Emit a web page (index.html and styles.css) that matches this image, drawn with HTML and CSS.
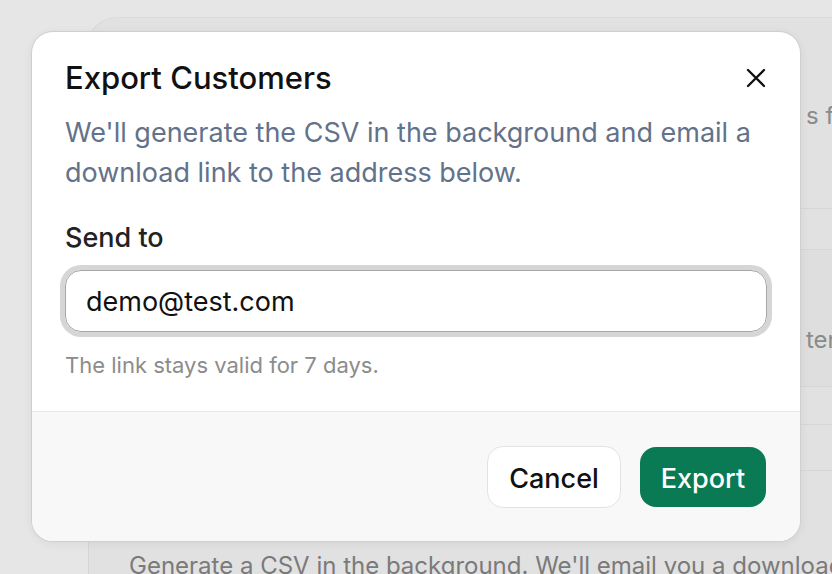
FILE: index.html
```html
<!DOCTYPE html>
<html lang="en">
<head>
<meta charset="utf-8">
<title>Export Customers</title>
<link rel="stylesheet" href="styles.css">
</head>
<body>
<div class="app">
  <section class="card">
    <div class="card-head">
      <div class="spacer"></div>
      <p class="bg-text">s for reporting</p>
    </div>
    <div class="row row-a"></div>
    <div class="row row-b">
      <div class="spacer"></div>
      <p class="bg-text">tenant data</p>
    </div>
    <div class="row row-c"></div>
    <div class="row row-d"></div>
    <p class="card-foot">Generate a CSV in the background. We'll email you a download link.</p>
  </section>
</div>

<div class="modal" role="dialog" aria-labelledby="modal-title">
  <div class="modal-body">
    <div class="modal-head">
      <h2 id="modal-title" class="modal-title">Export Customers</h2>
      <button class="close" aria-label="Close">
        <svg width="20" height="20" viewBox="0 0 20 20" fill="none" stroke="#111" stroke-width="2.3" stroke-linecap="round"><path d="M2 2 L18 18 M18 2 L2 18"/></svg>
      </button>
    </div>
    <p class="modal-desc">We'll generate the CSV in the background and email a download link to the address below.</p>
    <label class="field-label" for="email">Send to</label>
    <div class="field-ring">
      <input id="email" class="field-input" type="text" value="demo@test.com">
    </div>
    <p class="hint">The link stays valid for 7 days.</p>
  </div>
  <div class="modal-foot">
    <button class="btn btn-cancel">Cancel</button>
    <button class="btn btn-export">Export</button>
  </div>
</div>
</body>
</html>
```

FILE: styles.css
```css
* { box-sizing: border-box; }
html, body { margin: 0; padding: 0; }
body {
  width: 832px;
  height: 574px;
  overflow: hidden;
  background: #e6e6e6;
  font-family: Inter, "Noto Sans", sans-serif;
  position: relative;
}
.app {
  padding: 17px 0 0 88px;
}
.card {
  background: #e1e1e1;
  border-top: 1px solid #dadada;
  border-left: 1px solid #d6d6d6;
  border-top-left-radius: 28px;
  height: 700px;
}
.card-head, .row {
  display: grid;
  grid-template-columns: 717px 1fr;
  border-bottom: 1px solid #d6d6d6;
}
.card-head { height: 191px; align-items: start; }
.row-a { height: 41px; }
.row-b { height: 137px; background: #dedede; align-items: end; }
.row-c { height: 38px; }
.row-d { height: 46px; }
.bg-text {
  margin: 0;
  white-space: nowrap;
  font-size: 24px;
  color: #8a8a8a;
  line-height: 32px;
}
.card-head .bg-text { margin-top: 82px; }
.row-b .bg-text { margin-bottom: 30px; }
.card-foot {
  margin: 80px 0 0 40px;
  font-size: 24px;
  color: #7a7a7a;
  white-space: nowrap;
}

.modal {
  position: absolute;
  left: 31px;
  top: 31px;
  width: 770px;
  height: 511px;
  background: #fff;
  border: 1px solid #cfcfcf;
  border-radius: 22px;
  box-shadow: 0 2px 10px rgba(0,0,0,0.06);
  overflow: hidden;
  display: flex;
  flex-direction: column;
}
.modal-body {
  padding: 28px 33px 0 33px;
  flex: 1;
}
.modal-head {
  display: flex;
  justify-content: space-between;
  align-items: center;
}
.modal-title {
  margin: 0;
  font-size: 31px;
  font-weight: 500;
  line-height: 36px;
  color: #111;
}
.close {
  border: 0;
  background: none;
  padding: 0;
  width: 20px;
  height: 20px;
  margin-right: 1px;
  display: flex;
}
.modal-desc {
  margin: 17px 0 0;
  font-size: 27px;
  line-height: 40px;
  color: #62728a;
}
.field-label {
  display: block;
  margin-top: 28px;
  font-size: 27px;
  font-weight: 500;
  line-height: 34px;
  color: #222;
}
.field-ring {
  margin-top: 15px;
  border-radius: 16px;
  box-shadow: 0 0 0 5px #d6d6d6;
}
.field-input {
  display: block;
  width: 100%;
  height: 62px;
  border: 1.5px solid #a6a6a6;
  border-radius: 16px;
  padding: 0 20px;
  font-family: inherit;
  font-size: 27px;
  color: #111;
  background: #fff;
  outline: none;
}
.hint {
  margin: 19px 0 0;
  font-size: 22px;
  line-height: 28px;
  color: #8c8c8c;
}
.modal-foot {
  height: 130px;
  background: #f8f8f8;
  border-top: 1px solid #e6e6e6;
  display: flex;
  justify-content: flex-end;
  align-items: center;
  gap: 19px;
  padding-right: 34px;
}
.btn {
  font-family: inherit;
  font-size: 27px;
  font-weight: 500;
  border-radius: 16px;
  cursor: pointer;
  padding: 4px 0 0;
}
.btn-cancel {
  height: 62px;
  width: 134px;
  background: #fff;
  color: #111;
  border: 1px solid #e3e3e3;
}
.btn-export {
  height: 60px;
  width: 126px;
  background: #0a7a55;
  color: #fff;
  border: 0;
}
```
